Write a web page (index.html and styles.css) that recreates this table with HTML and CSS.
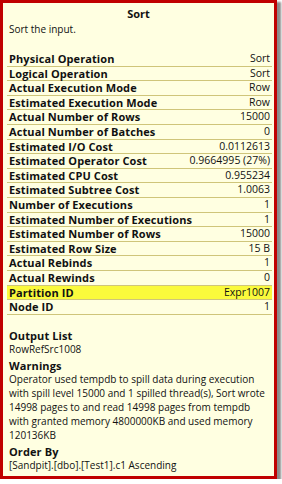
FILE: index.html
```html
<!DOCTYPE html>
<html>
<head>
<meta charset="utf-8">
<link rel="stylesheet" href="styles.css">
</head>
<body>
<div class="tip">
  <div class="title">Sort</div>
  <div class="desc">Sort the input.</div>
  <div class="props">
    <div class="row"><span class="k">Physical Operation</span><span class="v">Sort</span></div>
    <div class="row"><span class="k">Logical Operation</span><span class="v">Sort</span></div>
    <div class="row"><span class="k">Actual Execution Mode</span><span class="v">Row</span></div>
    <div class="row"><span class="k">Estimated Execution Mode</span><span class="v">Row</span></div>
    <div class="row"><span class="k">Actual Number of Rows</span><span class="v">15000</span></div>
    <div class="row"><span class="k">Actual Number of Batches</span><span class="v">0</span></div>
    <div class="row"><span class="k">Estimated I/O Cost</span><span class="v">0.0112613</span></div>
    <div class="row"><span class="k">Estimated Operator Cost</span><span class="v">0.9664995 (27%)</span></div>
    <div class="row"><span class="k">Estimated CPU Cost</span><span class="v">0.955234</span></div>
    <div class="row"><span class="k">Estimated Subtree Cost</span><span class="v">1.0063</span></div>
    <div class="row"><span class="k">Number of Executions</span><span class="v">1</span></div>
    <div class="row"><span class="k">Estimated Number of Executions</span><span class="v">1</span></div>
    <div class="row"><span class="k">Estimated Number of Rows</span><span class="v">15000</span></div>
    <div class="row"><span class="k">Estimated Row Size</span><span class="v">15 B</span></div>
    <div class="row"><span class="k">Actual Rebinds</span><span class="v">1</span></div>
    <div class="row"><span class="k">Actual Rewinds</span><span class="v">0</span></div>
    <div class="row hl"><span class="k">Partition ID</span><span class="v">Expr1007</span></div>
    <div class="row"><span class="k">Node ID</span><span class="v">1</span></div>
  </div>
  <div class="section">
    <div class="h">Output List</div>
    <div class="t">RowRefSrc1008</div>
    <div class="h">Warnings</div>
    <div class="t">Operator used tempdb to spill data during execution with spill level 15000 and 1 spilled thread(s), Sort wrote 14998 pages to and read 14998 pages from tempdb with granted memory 4800000KB and used memory 120136KB</div>
    <div class="h">Order By</div>
    <div class="t">[Sandpit].[dbo].[Test1].c1 Ascending</div>
  </div>
</div>
</body>
</html>
```
FILE: styles.css
```css
html, body {
  margin: 0;
  padding: 0;
  background: #ffffff;
}
body {
  font-family: "Open Sans", "Noto Sans", sans-serif;
  font-size: 10px;
  color: #111111;
}
.tip {
  width: 271px;
  height: 473px;
  background: #ffffe1;
  border: 3px solid #c00000;
  box-shadow: 3px 3px 2px 1px #8a8a8a;
  box-sizing: content-box;
  overflow: hidden;
}
.title {
  text-align: center;
  font-weight: bold;
  font-size: 11px;
  line-height: 14px;
  padding-top: 4px;
}
.desc {
  line-height: 14px;
  padding: 1px 6px 0;
}
.props {
  margin: 16px 2px 0 4px;
}
.row {
  display: flex;
  justify-content: space-between;
  align-items: center;
  height: 14.6px;
  box-sizing: border-box;
  line-height: 13.6px;
  border-bottom: 1px solid #cfc57a;
  padding: 0 2px 0 2px;
}
.row.hl {
  background: #fafa3c;
}
.k {
  font-weight: bold;
  font-size: 11px;
  line-height: 13.6px;
  letter-spacing: 0.1px;
  white-space: nowrap;
}
.v {
  font-size: 10.5px;
  line-height: 13.6px;
  white-space: nowrap;
}
.section {
  padding: 14px 6px 0;
}
.h {
  font-weight: bold;
  font-size: 11px;
  letter-spacing: 0.1px;
  line-height: 14px;
  margin-top: 3px;
}
.section .h:first-child {
  margin-top: 0;
}
.t {
  line-height: 13.8px;
}
```
